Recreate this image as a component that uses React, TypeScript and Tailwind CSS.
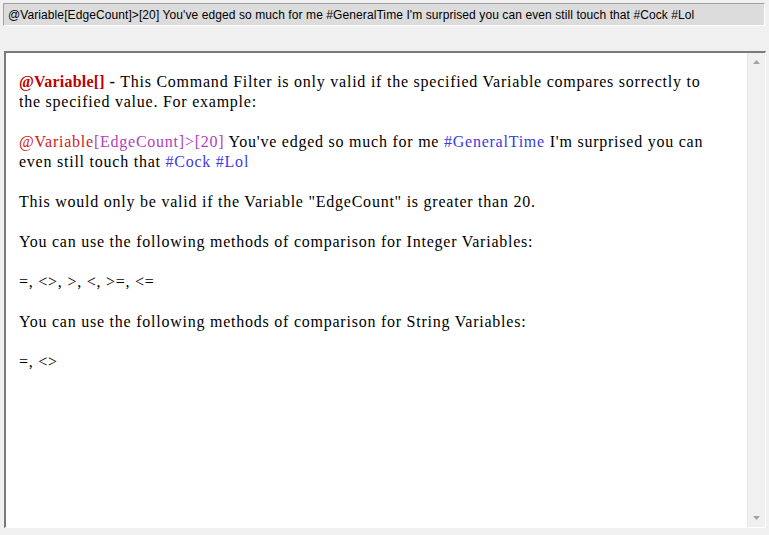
export default function App() {
  const serif = "font-['Liberation_Serif','Times_New_Roman',serif]";

  return (
    <div className="w-[769px] h-[535px] bg-[#f0f0f0] overflow-hidden pt-[3px]">
      {/* read-only preview line */}
      <div className="ml-[3px] w-[762px] h-[23px] bg-[#dcdcdc] border-t border-l border-b border-r border-t-[#a0a0a0] border-l-[#a0a0a0] border-b-white border-r-white flex items-center pl-[4px] text-[12px] tracking-[0.09px] text-black font-['Liberation_Sans',Arial,sans-serif] whitespace-nowrap">
        @Variable[EdgeCount]&gt;[20] You've edged so much for me #GeneralTime I'm surprised you can even still touch that #Cock #Lol
      </div>

      {/* help panel */}
      <div className="mt-[25px] ml-[4px] w-[762px] h-[477px] border-t-2 border-l-2 border-b border-r border-t-[#7a7a7a] border-l-[#7a7a7a] border-b-white border-r-white flex">
        <div className={`flex-1 bg-white pt-[19px] pl-[13px] pr-[32px] text-[16px] leading-[20px] tracking-[0.76px] text-black ${serif}`}>
          <p>
            <span className="font-bold text-[#c00000] tracking-[0.2px]">@Variable[]</span> <span className="font-bold">-</span> This Command Filter is only valid if the specified Variable compares sorrectly to the specified value. For example:
          </p>
          <p className="mt-[20px]">
            <span className="text-[#d02020]">@Variable</span>
            <span className="text-[#b040c0]">[EdgeCount]&gt;[20]</span> You've edged so much for me{" "}
            <span className="text-[#3c3ce0]">#GeneralTime</span> I'm surprised you can even still touch that{" "}
            <span className="text-[#3c3ce0]">#Cock</span> <span className="text-[#3c3ce0]">#Lol</span>
          </p>
          <p className="mt-[20px]">This would only be valid if the Variable "EdgeCount" is greater than 20.</p>
          <p className="mt-[20px]">You can use the following methods of comparison for Integer Variables:</p>
          <p className="mt-[20px]">=, &lt;&gt;, &gt;, &lt;, &gt;=, &lt;=</p>
          <p className="mt-[20px]">You can use the following methods of comparison for String Variables:</p>
          <p className="mt-[20px]">=, &lt;&gt;</p>
        </div>

        {/* scrollbar */}
        <div className="w-[17px] bg-[#f0f0f0] border-l border-[#e8e8e8] flex flex-col justify-between items-center py-[7px] mr-[1px]">
          <svg width="7" height="4" viewBox="0 0 7 4">
            <path d="M3.5 0 L7 4 L0 4 Z" fill="#a3a3a3" />
          </svg>
          <svg width="7" height="4" viewBox="0 0 7 4">
            <path d="M0 0 L7 0 L3.5 4 Z" fill="#a3a3a3" />
          </svg>
        </div>
      </div>
    </div>
  );
}
